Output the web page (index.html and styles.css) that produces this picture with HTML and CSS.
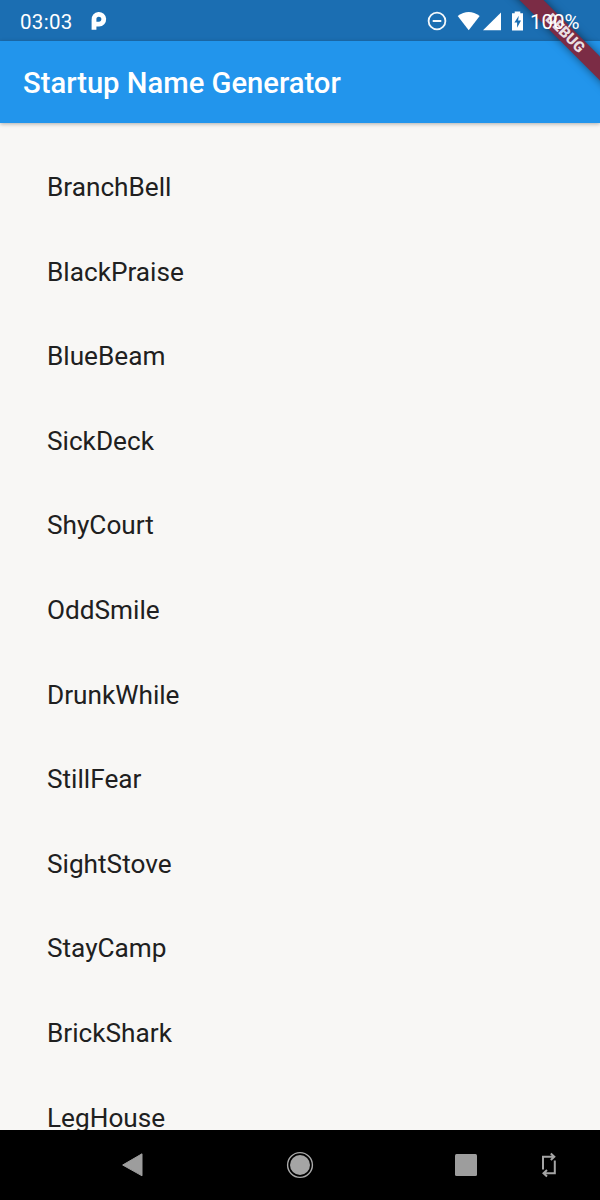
FILE: index.html
```html
<!DOCTYPE html>
<html lang="en">
<head>
<meta charset="utf-8">
<title>Startup Name Generator</title>
<link rel="stylesheet" href="styles.css">
</head>
<body>
<div class="screen">
  <div class="ribbon-clip"><div class="ribbon"><span>DEBUG</span></div></div>
  <div class="status-bar">
    <span class="clock">03:03</span>
    <svg class="app-icon" width="16" height="20" viewBox="0 0 16 20"><path d="M3 18.800V8.700A4.900 4.900 0 1 1 8 13.100H4" fill="none" stroke="#fff" stroke-width="4.800"/></svg>
    <svg class="status-icons" width="100" height="24" viewBox="0 0 100 24">
      <circle cx="10" cy="12" r="8.4" fill="none" stroke="#f4f8fb" stroke-width="1.8"/>
      <path d="M5.7 12h8.6" stroke="#f4f8fb" stroke-width="2"/>
      <path d="M30.700 6.500Q41.700-1.200 52.700 6.500L41.700 20.900Z" fill="#fff" transform="translate(0 .4)"/>
      <path d="M56 21.200L74 3.400V21.200Z" fill="#fff"/>
      <path d="M85 4.300h2.700V2.500h5.600v1.800H96v17.200H85Z" fill="#fff"/>
      <path d="M91.800 6.700L87.400 13.600H90.100V18.700L94 11.400H91.100Z" fill="#1b6eb2"/>
    </svg>
    <span class="battery">100%</span>
  </div>
  <header class="app-bar"><h1>Startup Name Generator</h1></header>
  <main class="list">
    <div class="row">BranchBell</div>
    <div class="row">BlackPraise</div>
    <div class="row">BlueBeam</div>
    <div class="row">SickDeck</div>
    <div class="row">ShyCourt</div>
    <div class="row">OddSmile</div>
    <div class="row">DrunkWhile</div>
    <div class="row">StillFear</div>
    <div class="row">SightStove</div>
    <div class="row">StayCamp</div>
    <div class="row">BrickShark</div>
    <div class="row">LegHouse</div>
  </main>
  <nav class="nav-bar">
    <svg class="back" width="22" height="24" viewBox="0 0 22 24"><path d="M20 .8V22.800L.7 12Z" fill="#9d9d9d" stroke="#9d9d9d" stroke-linejoin="round"/></svg>
    <svg class="home" width="28" height="28" viewBox="0 0 28 28"><circle cx="14" cy="14" r="12.400" fill="none" stroke="#aaa" stroke-width="1.400"/><circle cx="14" cy="14" r="10" fill="#a5a5a5"/></svg>
    <svg class="recent" width="22" height="22" viewBox="0 0 22 22"><rect width="22" height="22" rx="1.500" fill="#9d9d9d"/></svg>
    <svg class="rotate" width="16" height="26" viewBox="0 0 16 26"><path d="M2 17.500V4.700H12M9.800 1.500l3.500 3.200L9.800 8M13.800 8.500V21.300H4M6 18l-3.500 3.300L6 24.500" fill="none" stroke="#a5a5a5" stroke-width="2"/></svg>
  </nav>
</div>
</body>
</html>
```
FILE: styles.css
```css
body {
  margin: 0;
  font-family: Roboto, "Liberation Sans", sans-serif;
}
.screen {
  position: relative;
  display: flex;
  flex-direction: column;
  width: 600px;
  height: 1200px;
  overflow: hidden;
  background: #f8f7f5;
}
.status-bar {
  display: flex;
  align-items: center;
  flex: none;
  box-sizing: border-box;
  height: 41px;
  padding: 0 20px;
  background: #1b6eb2;
  color: #fff;
  font-size: 20.5px;
}
.clock {
  letter-spacing: 0.3px;
  padding-top: 2px;
}
.app-icon {
  margin-left: 18px;
}
.status-icons {
  margin-left: auto;
}
.battery {
  position: relative;
  z-index: 2;
  box-sizing: border-box;
  width: 53px;
  padding: 2px 0 0 3px;
  white-space: nowrap;
}
.app-bar {
  display: flex;
  align-items: center;
  flex: none;
  box-sizing: border-box;
  height: 82px;
  padding: 2px 0 0 23px;
  background: #2295ec;
  color: #fff;
  box-shadow: 0 1px 4px rgba(0, 0, 0, 0.3);
}
.app-bar h1 {
  margin: 0;
  font-size: 29.2px;
  font-weight: 500;
}
.list {
  flex: 1;
  min-height: 0;
  overflow: hidden;
  padding: 21.7px 47px 0;
}
.row {
  display: flex;
  align-items: center;
  height: 84.6px;
  color: #202020;
  font-size: 26.2px;
}
.nav-bar {
  display: flex;
  align-items: center;
  flex: none;
  height: 70px;
  background: #000;
}
.back {
  margin-left: 122px;
}
.home {
  margin-left: 142px;
}
.recent {
  margin-left: 141px;
}
.rotate {
  margin-left: 64px;
}
.ribbon-clip {
  position: absolute;
  z-index: 1;
  top: 0;
  right: 0;
  width: 110px;
  height: 110px;
  overflow: hidden;
}
.ribbon {
  position: absolute;
  top: 25px;
  left: -5px;
  width: 160px;
  height: 17px;
  background: #7b2c45;
  box-shadow: 0 0 8px rgba(0, 0, 0, 0.5);
  color: #eadfe3;
  font-size: 15px;
  font-weight: 900;
  line-height: 17px;
  text-align: center;
  transform: rotate(45deg);
}
```
